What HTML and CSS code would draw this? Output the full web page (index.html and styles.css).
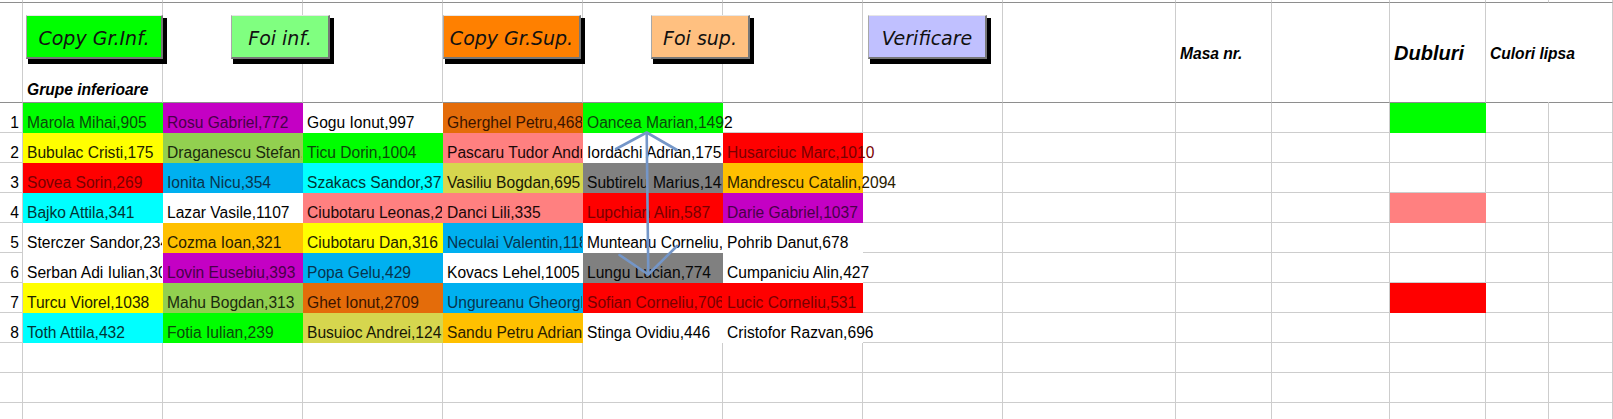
FILE: index.html
```html
<!DOCTYPE html>
<html lang="ro">
<head>
<meta charset="utf-8">
<title>Grupe</title>
<link rel="stylesheet" href="styles.css">
</head>
<body>
<div class="sheet">
  <div class="grid">
    <!-- strip row -->
    <div class="c s"></div><div class="c s"></div><div class="c s"></div><div class="c s"></div><div class="c s"></div><div class="c s"></div><div class="c s"></div><div class="c s"></div><div class="c s"></div><div class="c s"></div><div class="c s"></div><div class="c s"></div><div class="c s"></div><div class="c s"></div>
    <!-- header row -->
    <div class="c h"></div>
    <div class="c h hb">Grupe inferioare</div>
    <div class="c h"></div><div class="c h"></div><div class="c h"></div><div class="c h"></div><div class="c h"></div><div class="c h"></div><div class="c h"></div>
    <div class="c h hm">Masa nr.</div>
    <div class="c h"></div>
    <div class="c h hm big">Dubluri</div>
    <div class="c h hm ov nr">Culori lipsa</div>
    <div class="c h"></div>

    <!-- row 1 -->
    <div class="c rn">1</div>
    <div class="c f f-g">Marola Mihai,905</div>
    <div class="c f f-p">Rosu Gabriel,772</div>
    <div class="c f f-w">Gogu Ionut,997</div>
    <div class="c f f-d">Gherghel Petru,468</div>
    <div class="c f f-g ov">Oancea Marian,149<span class="blk">2</span></div>
    <div class="c"></div>
    <div class="c"></div><div class="c"></div><div class="c"></div><div class="c"></div>
    <div class="c f f-g"></div>
    <div class="c"></div><div class="c"></div>

    <!-- row 2 -->
    <div class="c rn">2</div>
    <div class="c f f-y">Bubulac Cristi,175</div>
    <div class="c f f-o">Draganescu Stefan,412</div>
    <div class="c f f-g">Ticu Dorin,1004</div>
    <div class="c f f-k">Pascaru Tudor Andrei,530</div>
    <div class="c f f-w">Iordachi Adrian,1758</div>
    <div class="c f f-r ov">Husarciuc Marc,1010</div>
    <div class="c"></div><div class="c"></div><div class="c"></div><div class="c"></div>
    <div class="c"></div>
    <div class="c"></div><div class="c"></div>

    <!-- row 3 -->
    <div class="c rn">3</div>
    <div class="c f f-r">Sovea Sorin,269</div>
    <div class="c f f-b">Ionita Nicu,354</div>
    <div class="c f f-c">Szakacs Sandor,371</div>
    <div class="c f f-h">Vasiliu Bogdan,695</div>
    <div class="c f f-x">Subtirelu Marius,1483</div>
    <div class="c f f-a ov">Mandrescu Catalin,2094</div>
    <div class="c"></div><div class="c"></div><div class="c"></div><div class="c"></div>
    <div class="c"></div>
    <div class="c"></div><div class="c"></div>

    <!-- row 4 -->
    <div class="c rn">4</div>
    <div class="c f f-c">Bajko Attila,341</div>
    <div class="c f f-w">Lazar Vasile,1107</div>
    <div class="c f f-k">Ciubotaru Leonas,215</div>
    <div class="c f f-k">Danci Lili,335</div>
    <div class="c f f-r">Lupchian Alin,587</div>
    <div class="c f f-p">Darie Gabriel,1037</div>
    <div class="c"></div><div class="c"></div><div class="c"></div><div class="c"></div>
    <div class="c f f-k"></div>
    <div class="c"></div><div class="c"></div>

    <!-- row 5 -->
    <div class="c rn">5</div>
    <div class="c f f-w">Sterczer Sandor,234</div>
    <div class="c f f-a">Cozma Ioan,321</div>
    <div class="c f f-y">Ciubotaru Dan,316</div>
    <div class="c f f-b">Neculai Valentin,1186</div>
    <div class="c f f-w">Munteanu Corneliu,512</div>
    <div class="c f f-w">Pohrib Danut,678</div>
    <div class="c"></div><div class="c"></div><div class="c"></div><div class="c"></div>
    <div class="c"></div>
    <div class="c"></div><div class="c"></div>

    <!-- row 6 -->
    <div class="c rn">6</div>
    <div class="c f f-w">Serban Adi Iulian,301</div>
    <div class="c f f-p">Lovin Eusebiu,393</div>
    <div class="c f f-b">Popa Gelu,429</div>
    <div class="c f f-w">Kovacs Lehel,1005</div>
    <div class="c f f-x">Lungu Lucian,774</div>
    <div class="c f f-w ov">Cumpaniciu Alin,427</div>
    <div class="c"></div><div class="c"></div><div class="c"></div><div class="c"></div>
    <div class="c"></div>
    <div class="c"></div><div class="c"></div>

    <!-- row 7 -->
    <div class="c rn">7</div>
    <div class="c f f-y">Turcu Viorel,1038</div>
    <div class="c f f-o">Mahu Bogdan,313</div>
    <div class="c f f-d">Ghet Ionut,2709</div>
    <div class="c f f-b">Ungureanu Gheorghe,611</div>
    <div class="c f f-r">Sofian Corneliu,7068</div>
    <div class="c f f-r">Lucic Corneliu,531</div>
    <div class="c"></div><div class="c"></div><div class="c"></div><div class="c"></div>
    <div class="c f f-r"></div>
    <div class="c"></div><div class="c"></div>

    <!-- row 8 -->
    <div class="c rn">8</div>
    <div class="c f f-c">Toth Attila,432</div>
    <div class="c f f-g">Fotia Iulian,239</div>
    <div class="c f f-h">Busuioc Andrei,1245</div>
    <div class="c f f-a">Sandu Petru Adrian,880</div>
    <div class="c f f-w">Stinga Ovidiu,446</div>
    <div class="c f f-w ov">Cristofor Razvan,696</div>
    <div class="c"></div><div class="c"></div><div class="c"></div><div class="c"></div>
    <div class="c"></div>
    <div class="c"></div><div class="c"></div>

    <!-- rows 9-11 -->
    <div class="c"></div><div class="c"></div><div class="c"></div><div class="c"></div><div class="c"></div><div class="c"></div><div class="c"></div><div class="c"></div><div class="c"></div><div class="c"></div><div class="c"></div><div class="c"></div><div class="c"></div><div class="c"></div>
    <div class="c"></div><div class="c"></div><div class="c"></div><div class="c"></div><div class="c"></div><div class="c"></div><div class="c"></div><div class="c"></div><div class="c"></div><div class="c"></div><div class="c"></div><div class="c"></div><div class="c"></div><div class="c"></div>
    <div class="c"></div><div class="c"></div><div class="c"></div><div class="c"></div><div class="c"></div><div class="c"></div><div class="c"></div><div class="c"></div><div class="c"></div><div class="c"></div><div class="c"></div><div class="c"></div><div class="c"></div><div class="c"></div>
  </div>

  <div class="btn b1">Copy Gr.Inf.</div>
  <div class="btn b2">Foi inf.</div>
  <div class="btn b3">Copy Gr.Sup.</div>
  <div class="btn b4">Foi sup.</div>
  <div class="btn b5">Verificare</div>

  <svg class="arrow" width="1613" height="419" viewBox="0 0 1613 419" aria-hidden="true">
    <g fill="none" stroke="#7496c8" stroke-width="2.6" stroke-linecap="round" stroke-linejoin="round">
      <path d="M646.7 133 L648.3 274"/>
      <path d="M616 149 L646.7 132.5 L677 150"/>
      <path d="M619.5 255 L648.3 274.5 L677 246"/>
    </g>
  </svg>
</div>
</body>
</html>
```

FILE: styles.css
```css
html, body {
  margin: 0;
  padding: 0;
  overflow: hidden;
  background: #ffffff;
}

.sheet {
  position: relative;
  width: 1613px;
  height: 419px;
  overflow: hidden;
  font-family: "Liberation Sans", Arial, sans-serif;
  color: #000;
}

.grid {
  display: grid;
  grid-template-columns: 23px repeat(7, 140px) 173px 96px 118px 96px 63px 64px;
  grid-template-rows: 3px 100px;
  grid-auto-rows: 30px;
}

.c {
  box-sizing: border-box;
  min-width: 0;
  border-right: 1px solid #cdcdcd;
  border-bottom: 1px solid #cdcdcd;
  overflow: hidden;
  white-space: nowrap;
  display: flex;
  align-items: flex-end;
  padding: 0 0 0 4px;
  font-size: 15.6px;
  line-height: 18px;
}

.s,
.h {
  border-bottom-color: #8e8e8e;
}

.rn {
  justify-content: flex-end;
  padding: 0 3px 0 0;
}

.ov {
  overflow: visible;
}

.nr {
  border-right-color: transparent;
}

.hb {
  font-weight: bold;
  font-style: italic;
  padding-bottom: 3px;
}

.hm {
  align-items: center;
  padding-top: 2px;
  font-weight: bold;
  font-style: italic;
}

.big {
  font-size: 20px;
  line-height: 23px;
}

.blk {
  color: #000;
}

/* cell fills: gridlines hidden under fills */
.f { border-color: transparent; }
.f-g { background: #00ff00; color: #0b480b; }
.f-y { background: #ffff00; color: #222200; }
.f-r { background: #ff0000; color: #780000; }
.f-c { background: #00ffff; color: #003636; }
.f-p { background: #c400c4; color: #480048; }
.f-o { background: #92d050; color: #1a2a0e; }
.f-b { background: #00b0f0; color: #08344e; }
.f-a { background: #ffc000; color: #2a2000; }
.f-k { background: #ff8080; color: #1a0808; }
.f-d { background: #e46c0a; color: #3a1400; }
.f-h { background: #d6d64e; color: #181805; }
.f-x { background: #808080; color: #080808; }
.f-w { background: #ffffff; color: #000000; }

/* floating form buttons */
.btn {
  position: absolute;
  top: 15px;
  height: 44px;
  box-sizing: border-box;
  border-style: solid;
  border-width: 1px 2px 2px 1px;
  border-color: #e6e6e6 #777777 #777777 #a8a8a8;
  box-shadow: 3px 4px 0 1px #000;
  display: flex;
  align-items: center;
  justify-content: center;
  padding-top: 2px;
  font-family: "DejaVu Sans", "Liberation Sans", sans-serif;
  font-style: italic;
  font-size: 19px;
  color: #111;
  white-space: nowrap;
}

.b1 { left: 26px; width: 137px; background: #00ff00; }
.b2 { left: 231px; width: 99px; background: #80ff80; }
.b3 { left: 443px; width: 138px; background: #ff8000; }
.b4 { left: 651px; width: 99px; background: #ffc080; }
.b5 { left: 868px; width: 119px; background: #c0c0ff; }

.arrow {
  position: absolute;
  left: 0;
  top: 0;
  pointer-events: none;
}
```
